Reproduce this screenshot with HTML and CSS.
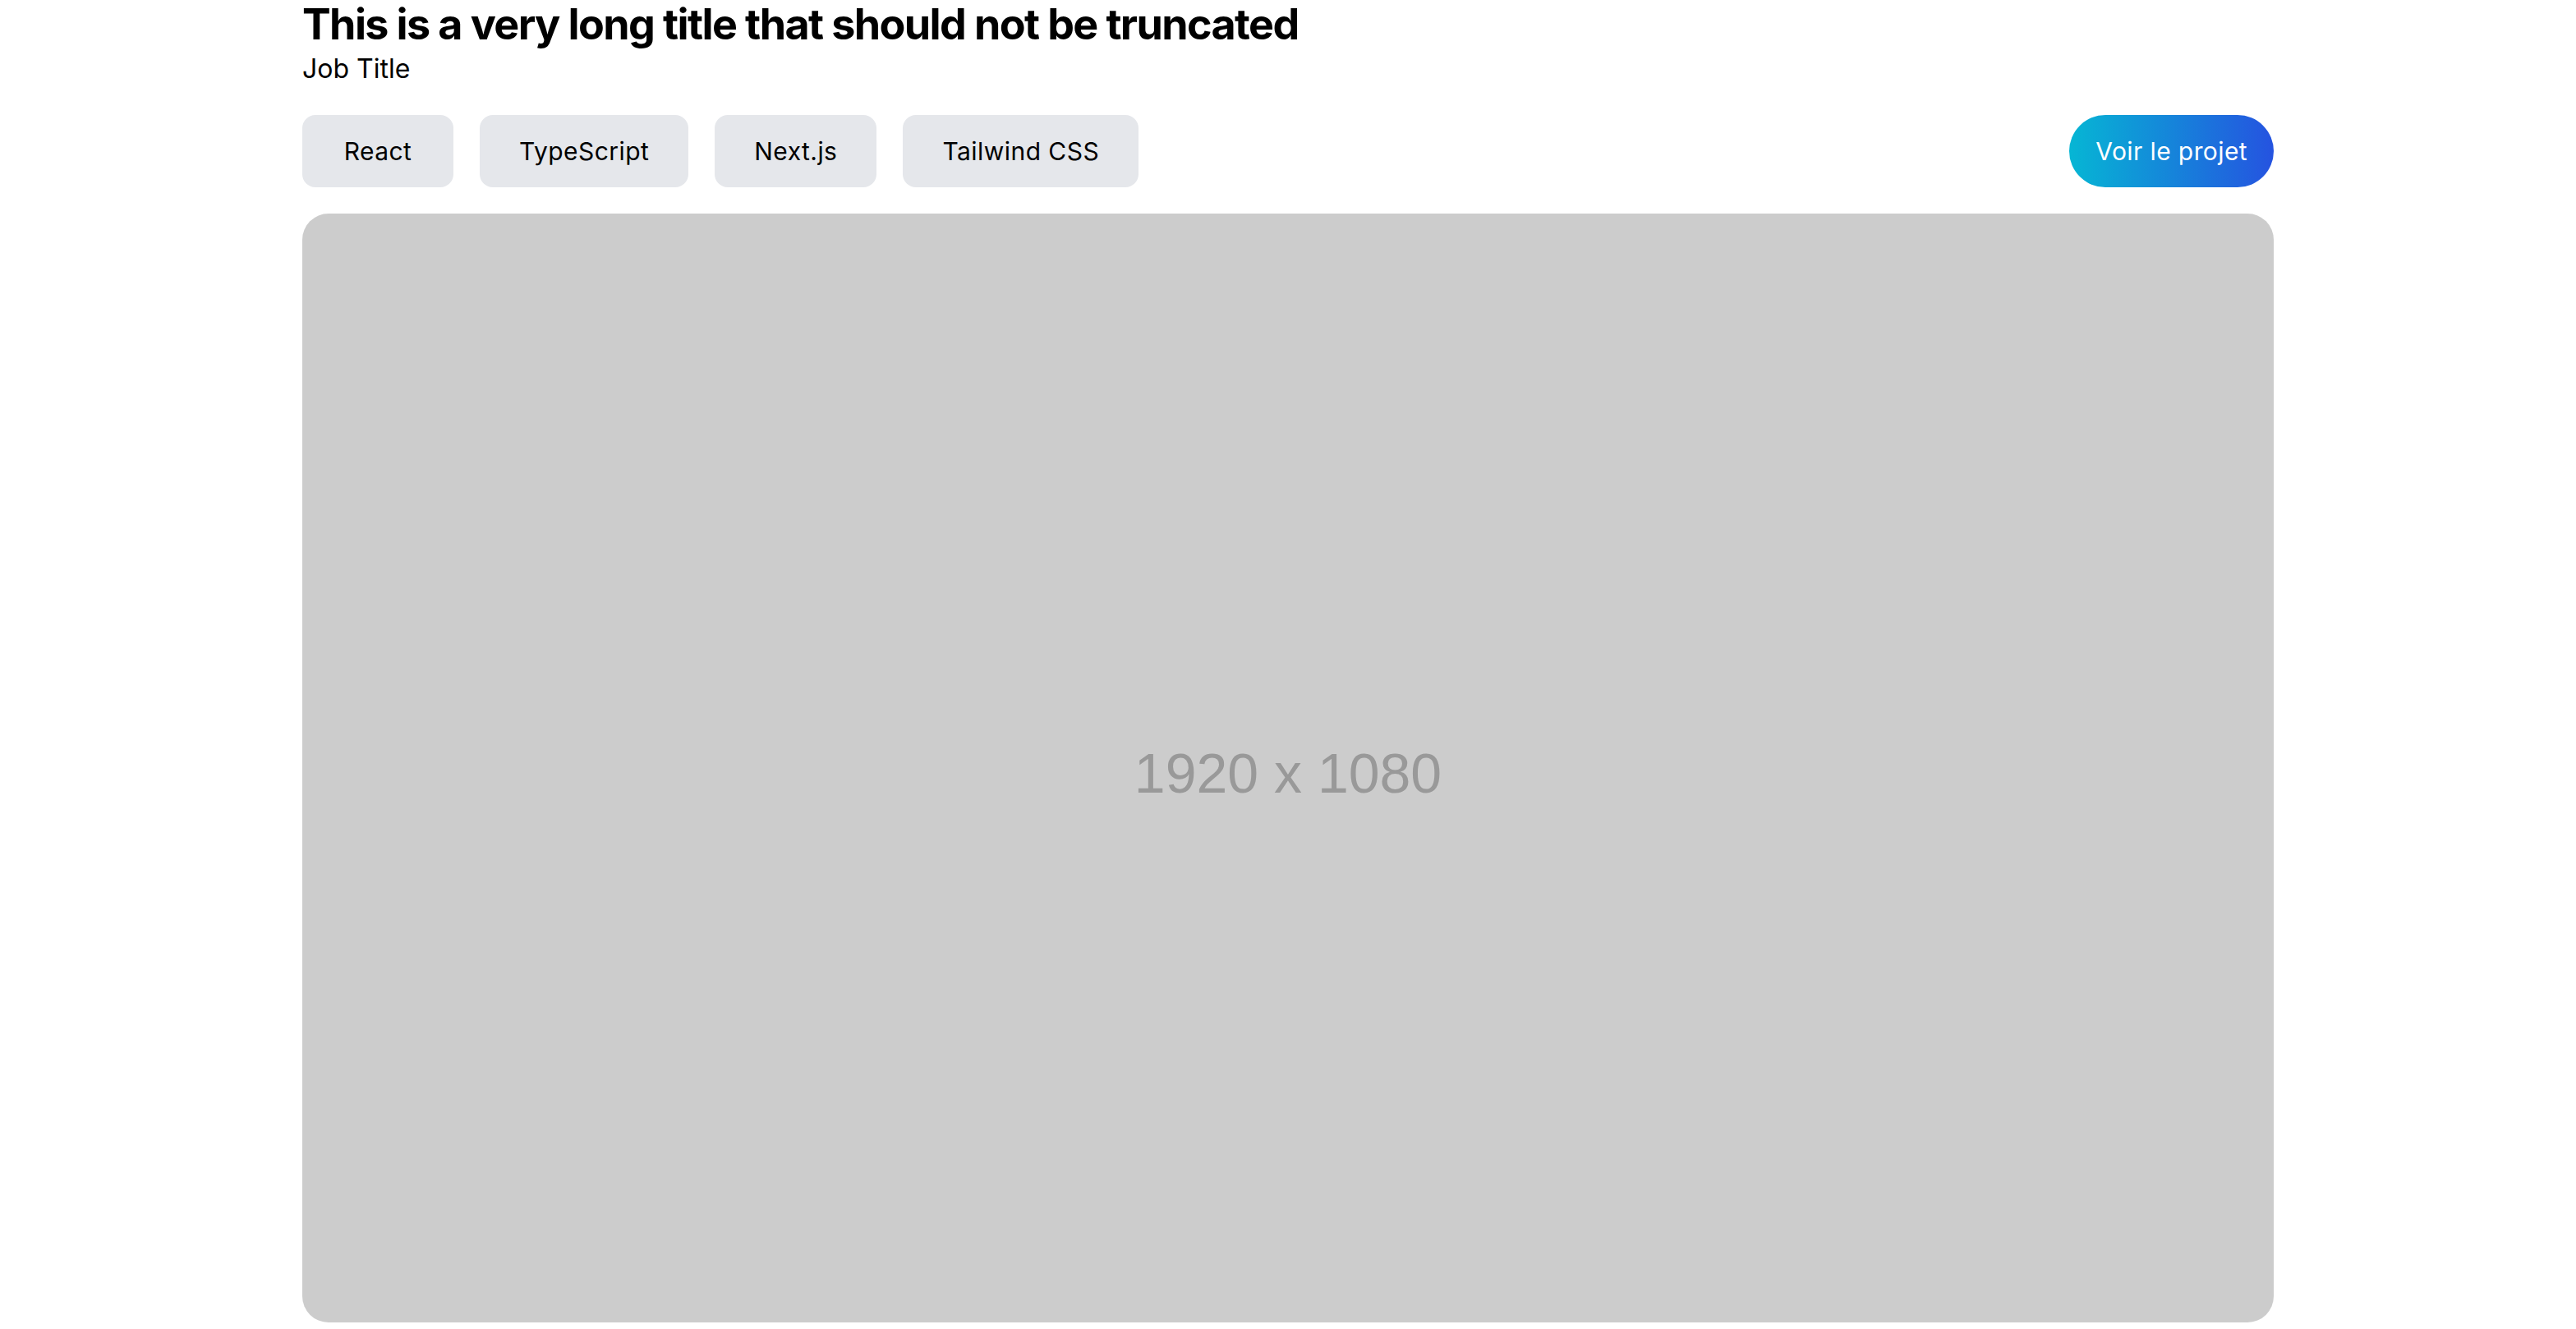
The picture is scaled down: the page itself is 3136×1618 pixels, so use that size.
FILE: index.html
```html
<!DOCTYPE html>
<html lang="fr">
<head>
<meta charset="utf-8">
<title>Projet</title>
<link rel="stylesheet" href="styles.css">
</head>
<body>
<main class="project">
  <header class="project-head">
    <h1 class="project-title">This is a very long title that should not be truncated</h1>
    <p class="project-role">Job Title</p>
  </header>
  <div class="project-bar">
    <ul class="tags">
      <li class="tag">React</li>
      <li class="tag">TypeScript</li>
      <li class="tag">Next.js</li>
      <li class="tag">Tailwind CSS</li>
    </ul>
    <a class="cta" href="#">Voir le projet</a>
  </div>
  <div class="cover">
    <span class="cover-label">1920 x 1080</span>
  </div>
</main>
</body>
</html>
```

FILE: styles.css
```css
html, body {
  margin: 0;
  padding: 0;
  background: #ffffff;
}
body {
  font-family: Inter, "Noto Sans", sans-serif;
  color: #000000;
}
.project {
  max-width: 2400px;
  margin: 0 auto;
  display: flex;
  flex-direction: column;
}
.project-head {
  display: flex;
  flex-direction: column;
}
.project-title {
  margin: 0;
  font-size: 52px;
  line-height: 60px;
  letter-spacing: -1.6px;
  font-weight: 700;
  color: #000;
}
.project-role {
  margin: 0;
  font-size: 32px;
  line-height: 48px;
  color: #000;
}
.project-bar {
  display: flex;
  justify-content: space-between;
  align-items: center;
  margin-top: 32px;
}
.tags {
  list-style: none;
  margin: 0;
  padding: 0;
  display: flex;
  gap: 32px;
}
.tag {
  min-width: 184px;
  box-sizing: border-box;
  text-align: center;
  background: #e5e7eb;
  border-radius: 16px;
  padding: 24px 48px;
  font-size: 30px;
  line-height: 40px;
  letter-spacing: 0.45px;
  color: #000;
}
.cta {
  display: block;
  padding: 24px 32px;
  border-radius: 9999px;
  background: linear-gradient(to right, #06b6d4, #2553e0);
  color: #ffffff;
  font-size: 30px;
  line-height: 40px;
  letter-spacing: 0.4px;
  text-decoration: none;
}
.cover {
  margin-top: 32px;
  aspect-ratio: 16 / 9;
  background: #cccccc;
  border-radius: 32px;
  display: flex;
  align-items: center;
  justify-content: center;
}
.cover-label {
  font-family: "Liberation Sans", Arial, sans-serif;
  font-size: 68px;
  color: #999999;
  margin-top: 12px;
}
```
